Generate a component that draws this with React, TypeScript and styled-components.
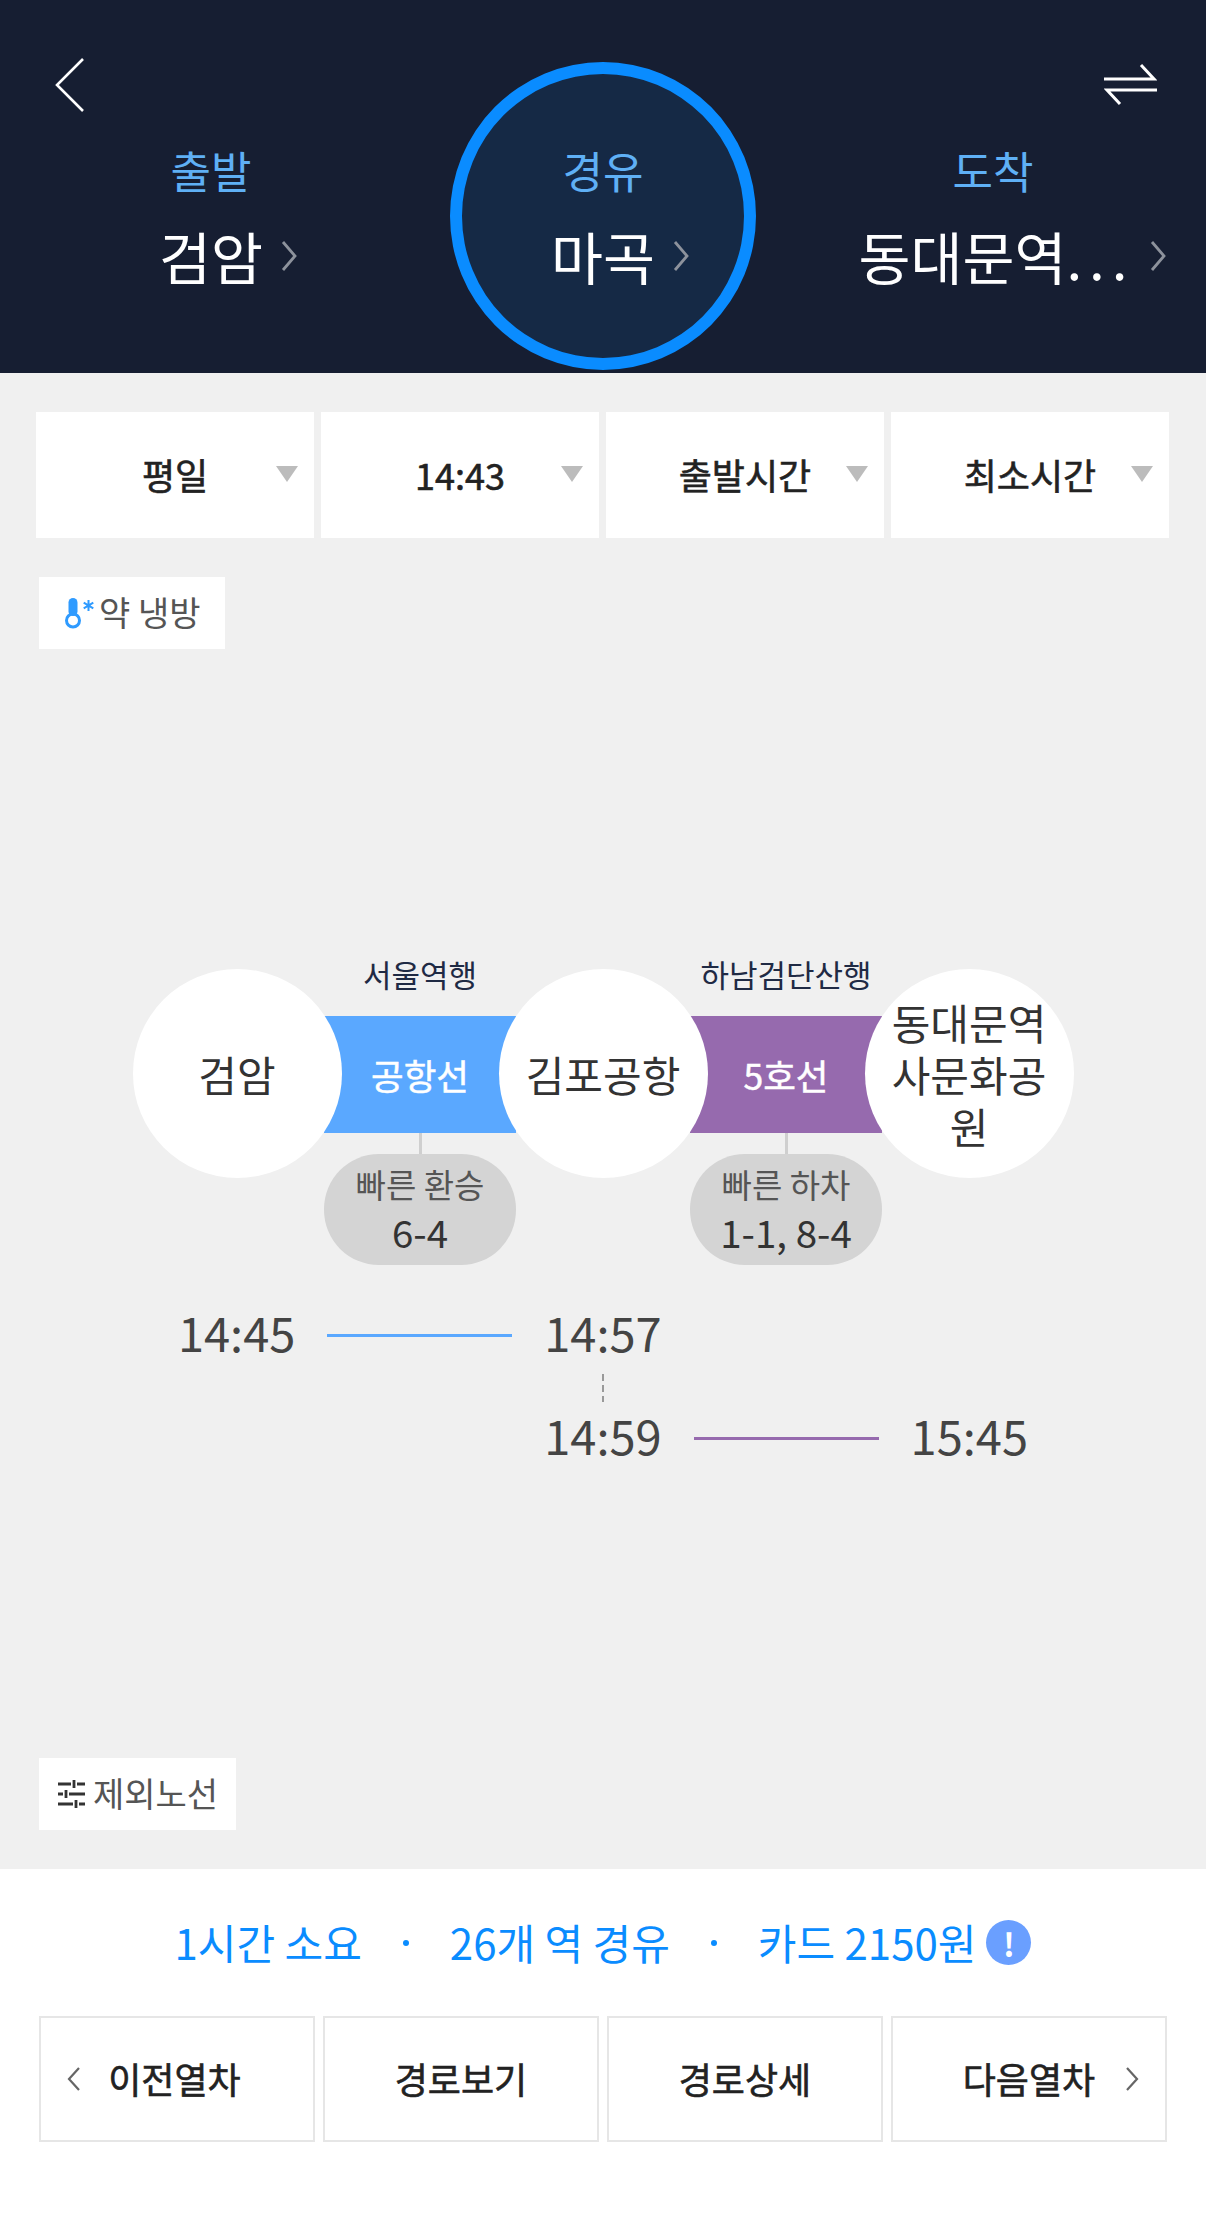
import React from "react";
import styled, { createGlobalStyle } from "styled-components";

const GlobalStyle = createGlobalStyle`
  html, body {
    margin: 0;
    padding: 0;
    background: #fff;
  }
  body {
    font-family: "Noto Sans CJK KR", "Noto Sans", sans-serif;
  }
  * {
    box-sizing: border-box;
  }
`;

const Page = styled.div`
  width: 1206px;
  height: 2216px;
  display: flex;
  flex-direction: column;
  overflow: hidden;
`;

/* header */
const Header = styled.header`
  height: 373px;
  background: #161e32;
  display: grid;
  grid-template-columns: 450px 306px 450px;
  grid-template-rows: 140px 1fr;
`;

const BackButton = styled.div`
  grid-column: 1;
  grid-row: 1;
  padding: 57px 0 0 54px;
`;

const SwapButton = styled.div`
  grid-column: 3;
  grid-row: 1;
  justify-self: end;
  padding: 63px 49px 0 0;
`;

const Stop = styled.div<{ $col: number; $shift: number }>`
  grid-column: ${(p) => p.$col};
  grid-row: 2;
  display: flex;
  flex-direction: column;
  align-items: center;
  padding-left: ${(p) => (p.$shift > 0 ? p.$shift : 0)}px;
  padding-right: ${(p) => (p.$shift < 0 ? -p.$shift : 0)}px;
`;

const ViaCircle = styled.div`
  grid-column: 2;
  grid-row: 1 / span 2;
  width: 306px;
  height: 308px;
  margin-top: 62px;
  border: 12px solid #0a8cff;
  border-radius: 50%;
  background: #152945;
  display: flex;
  flex-direction: column;
  align-items: center;
  padding-top: 66px;
`;

const StopLabel = styled.div`
  font-size: 44px;
  line-height: 60px;
  color: #5fb0f5;
`;

const StopValue = styled.div`
  display: flex;
  align-items: center;
  margin-top: 20px;
  font-size: 56.5px;
  line-height: 70px;
  color: #fff;
  white-space: nowrap;
`;

const Ellipsis = styled.span`
  letter-spacing: 7px;
  margin-right: -7px;
`;

const ValueChevron = styled.svg`
  width: 16px;
  height: 30px;
  margin-left: 18px;
  margin-right: -34px;
  margin-top: 2px;
  flex: none;
`;

const LastChevron = styled(ValueChevron)`
  margin-left: 22px;
  margin-right: -38px;
`;

/* gray area */
const Main = styled.main`
  height: 1496px;
  background: #f0f0f0;
  display: flex;
  flex-direction: column;
  padding-bottom: 39px;
`;

const FilterRow = styled.div`
  display: grid;
  grid-template-columns: repeat(4, 278px);
  column-gap: 7px;
  margin: 39px 0 0 36px;
`;

const Filter = styled.div`
  height: 126px;
  background: #fff;
  display: grid;
  grid-template-columns: 1fr auto 1fr;
  align-items: center;
  font-size: 36px;
  color: #222;
  -webkit-text-stroke: 0.6px #222;
  padding: 0 16px;
`;

const FilterText = styled.span`
  grid-column: 2;
  margin-top: -2px;
`;

const FilterArrow = styled.i`
  grid-column: 3;
  justify-self: end;
  width: 0;
  height: 0;
  border-left: 11px solid transparent;
  border-right: 11px solid transparent;
  border-top: 16px solid #bcbcbc;
  margin-top: -3px;
`;

const Chip = styled.div<{ $w: number }>`
  width: ${(p) => p.$w}px;
  height: 72px;
  background: #fff;
  margin-left: 39px;
  display: flex;
  align-items: center;
  gap: 8px;
  font-size: 34px;
  color: #555;
  padding-left: 19px;
`;

const ChipText = styled.span`
  margin-top: -4px;
  white-space: nowrap;
`;

const WeatherChip = styled(Chip)`
  margin-top: 39px;
  padding-left: 26px;
  gap: 5px;
`;

const ExcludeChip = styled(Chip)`
  margin-top: auto;
`;

/* route diagram */
const Route = styled.div`
  display: flex;
  justify-content: center;
  align-items: flex-start;
  margin-top: 306px;
`;

const Station = styled.div`
  width: 209px;
  height: 209px;
  flex: none;
  margin-top: 14px;
  border-radius: 50%;
  background: #fff;
  position: relative;
  z-index: 1;
  display: flex;
  align-items: center;
  justify-content: center;
  text-align: center;
  padding: 0 22px;
  font-size: 42px;
  line-height: 52px;
  color: #333;
`;

const Segment = styled.div`
  width: 192px;
  flex: none;
  margin: 0 -17.5px;
  display: flex;
  flex-direction: column;
  align-items: center;
`;

const Direction = styled.div`
  height: 40px;
  margin-bottom: 21px;
  font-size: 31px;
  line-height: 37px;
  color: #1f2a44;
  white-space: nowrap;
`;

const Band = styled.div<{ $color: string }>`
  width: 100%;
  height: 117px;
  background: ${(p) => p.$color};
  display: flex;
  align-items: center;
  justify-content: center;
  font-size: 35.5px;
  color: #fff;
  -webkit-text-stroke: 0.5px #fff;
`;

const Connector = styled.div`
  width: 3px;
  height: 21px;
  background: #cfcfcf;
`;

const Pill = styled.div`
  width: 100%;
  height: 111px;
  border-radius: 55px;
  background: #d4d4d4;
  display: flex;
  flex-direction: column;
  align-items: center;
  justify-content: center;
  padding-bottom: 6px;
`;

const PillTitle = styled.div`
  font-size: 33px;
  line-height: 49px;
  color: #555;
`;

const PillValue = styled.div`
  font-size: 38.5px;
  line-height: 44px;
  color: #333;
`;

/* times */
const Times = styled.div`
  width: 914px;
  margin: 40px 0 0 146px;
  display: grid;
  grid-template-columns: repeat(5, 1fr);
  grid-template-rows: 60px 43px 60px;
  align-items: center;
  justify-items: center;
`;

const Time = styled.div<{ $col: number; $row: number }>`
  grid-column: ${(p) => p.$col};
  grid-row: ${(p) => p.$row};
  margin-top: -6px;
  font-size: 47px;
  line-height: 60px;
  color: #444;
`;

const TimeLine = styled.div<{ $col: number; $row: number; $color: string }>`
  grid-column: ${(p) => p.$col};
  grid-row: ${(p) => p.$row};
  width: 185px;
  height: 3px;
  background: ${(p) => p.$color};
`;

const TransferDash = styled.div`
  grid-column: 3;
  grid-row: 2;
  width: 2px;
  height: 28px;
  margin-top: 2px;
  background: repeating-linear-gradient(to bottom, #999 0 7px, transparent 7px 11px);
`;

/* footer */
const Footer = styled.footer`
  flex: 1;
  background: #fff;
  padding: 0 39px;
`;

const Summary = styled.div`
  height: 147px;
  display: flex;
  align-items: center;
  justify-content: center;
  font-size: 42px;
  color: #0a8cff;
  white-space: nowrap;
`;

const SummaryText = styled.span`
  margin-top: -3px;
`;

const Dot = styled.span`
  width: 6px;
  height: 6px;
  border-radius: 50%;
  background: #0a8cff;
  margin: 0 41px;
`;

const InfoBadge = styled.span`
  width: 45px;
  height: 45px;
  margin-left: 10px;
  border-radius: 50%;
  background: #6a9fff;
  display: flex;
  align-items: center;
  justify-content: center;
  color: #fff;
  font-size: 32px;
  font-weight: 700;
  line-height: 1;
`;

const ButtonRow = styled.div`
  display: grid;
  grid-template-columns: repeat(4, 276px);
  column-gap: 8px;
`;

const ActionButton = styled.div`
  height: 126px;
  border: 2px solid #e6e6e6;
  display: grid;
  grid-template-columns: 1fr auto 1fr;
  align-items: center;
  padding: 0 26px;
  font-size: 36px;
  color: #222;
  -webkit-text-stroke: 0.6px #222;
`;

const ButtonLabel = styled.span`
  grid-column: 2;
  margin-top: -3px;
`;

const PrevLabel = styled(ButtonLabel)`
  margin-left: -5px;
`;

const ButtonChevron = styled.svg<{ $side: "left" | "right" }>`
  grid-column: ${(p) => (p.$side === "left" ? 1 : 3)};
  grid-row: 1;
  justify-self: ${(p) => (p.$side === "left" ? "start" : "end")};
  width: 14px;
  height: 24px;
`;

const Thermometer = () => (
  <svg width="29" height="31" viewBox="0 0 29 31">
    <circle cx="8" cy="22.500" r="6.500" fill="#fff" stroke="#2f9bff" strokeWidth="3" />
    <rect x="3.500" y="0" width="9" height="18" rx="4.500" fill="#2f9bff" />
    <path
      d="M23.500 2v11M18.700 4.700l9.600 5.600M28.300 4.700l-9.600 5.600"
      stroke="#2f9bff"
      strokeWidth="2"
      fill="none"
    />
  </svg>
);

const SlidersIcon = () => (
  <svg width="27" height="28" viewBox="0 0 27 28">
    <g stroke="#333" strokeWidth="2.800" fill="none">
      <path d="M0 4h13M19 4h8M16 0v8" />
      <path d="M0 14h5M11 14h16M8 10v8" />
      <path d="M0 24h15M21 24h6M18 20v8" />
    </g>
  </svg>
);

const ArrowPath = () => (
  <path d="M2 1l12 14L2 29" fill="none" stroke="#8d929c" strokeWidth="2.800" />
);

const filters = ["평일", "14:43", "출발시간", "최소시간"];

export default function App() {
  return (
    <Page>
      <GlobalStyle />
      <Header>
        <BackButton>
          <svg width="32" height="56" viewBox="0 0 32 56">
            <path d="M29 2L3 28l26 26" fill="none" stroke="#fff" strokeWidth="2.600" />
          </svg>
        </BackButton>
        <SwapButton>
          <svg width="53" height="44" viewBox="0 0 53 44">
            <path d="M0 16h50L37 2" fill="none" stroke="#fff" strokeWidth="3" />
            <path d="M53 27H3l13 14" fill="none" stroke="#fff" strokeWidth="3" />
          </svg>
        </SwapButton>
        <Stop $col={1} $shift={-28}>
          <StopLabel>출발</StopLabel>
          <StopValue>
            검암
            <ValueChevron viewBox="0 0 16 30">
              <ArrowPath />
            </ValueChevron>
          </StopValue>
        </Stop>
        <ViaCircle>
          <StopLabel>경유</StopLabel>
          <StopValue>
            마곡
            <ValueChevron viewBox="0 0 16 30">
              <ArrowPath />
            </ValueChevron>
          </StopValue>
        </ViaCircle>
        <Stop $col={3} $shift={24}>
          <StopLabel>도착</StopLabel>
          <StopValue>
            동대문역<Ellipsis>...</Ellipsis>
            <LastChevron viewBox="0 0 16 30">
              <ArrowPath />
            </LastChevron>
          </StopValue>
        </Stop>
      </Header>

      <Main>
        <FilterRow>
          {filters.map((f) => (
            <Filter key={f}>
              <FilterText>{f}</FilterText>
              <FilterArrow />
            </Filter>
          ))}
        </FilterRow>

        <WeatherChip $w={186}>
          <Thermometer />
          <ChipText>약 냉방</ChipText>
        </WeatherChip>

        <Route>
          <Station>검암</Station>
          <Segment>
            <Direction>서울역행</Direction>
            <Band $color="#5aa8ff">공항선</Band>
            <Connector />
            <Pill>
              <PillTitle>빠른 환승</PillTitle>
              <PillValue>6-4</PillValue>
            </Pill>
          </Segment>
          <Station>김포공항</Station>
          <Segment>
            <Direction>하남검단산행</Direction>
            <Band $color="#966aae">5호선</Band>
            <Connector />
            <Pill>
              <PillTitle>빠른 하차</PillTitle>
              <PillValue>1-1, 8-4</PillValue>
            </Pill>
          </Segment>
          <Station>동대문역사문화공원</Station>
        </Route>

        <Times>
          <Time $col={1} $row={1}>14:45</Time>
          <TimeLine $col={2} $row={1} $color="#5aa8ff" />
          <Time $col={3} $row={1}>14:57</Time>
          <TransferDash />
          <Time $col={3} $row={3}>14:59</Time>
          <TimeLine $col={4} $row={3} $color="#966aae" />
          <Time $col={5} $row={3}>15:45</Time>
        </Times>

        <ExcludeChip $w={197}>
          <SlidersIcon />
          <ChipText>제외노선</ChipText>
        </ExcludeChip>
      </Main>

      <Footer>
        <Summary>
          <SummaryText>1시간 소요</SummaryText>
          <Dot />
          <SummaryText>26개 역 경유</SummaryText>
          <Dot />
          <SummaryText>카드 2150원</SummaryText>
          <InfoBadge>!</InfoBadge>
        </Summary>
        <ButtonRow>
          <ActionButton>
            <ButtonChevron $side="left" viewBox="0 0 14 24">
              <path d="M12 1L2 12l10 11" fill="none" stroke="#666" strokeWidth="2.200" />
            </ButtonChevron>
            <PrevLabel>이전열차</PrevLabel>
          </ActionButton>
          <ActionButton>
            <ButtonLabel>경로보기</ButtonLabel>
          </ActionButton>
          <ActionButton>
            <ButtonLabel>경로상세</ButtonLabel>
          </ActionButton>
          <ActionButton>
            <ButtonLabel>다음열차</ButtonLabel>
            <ButtonChevron $side="right" viewBox="0 0 14 24">
              <path d="M2 1l10 11L2 23" fill="none" stroke="#666" strokeWidth="2.200" />
            </ButtonChevron>
          </ActionButton>
        </ButtonRow>
      </Footer>
    </Page>
  );
}
